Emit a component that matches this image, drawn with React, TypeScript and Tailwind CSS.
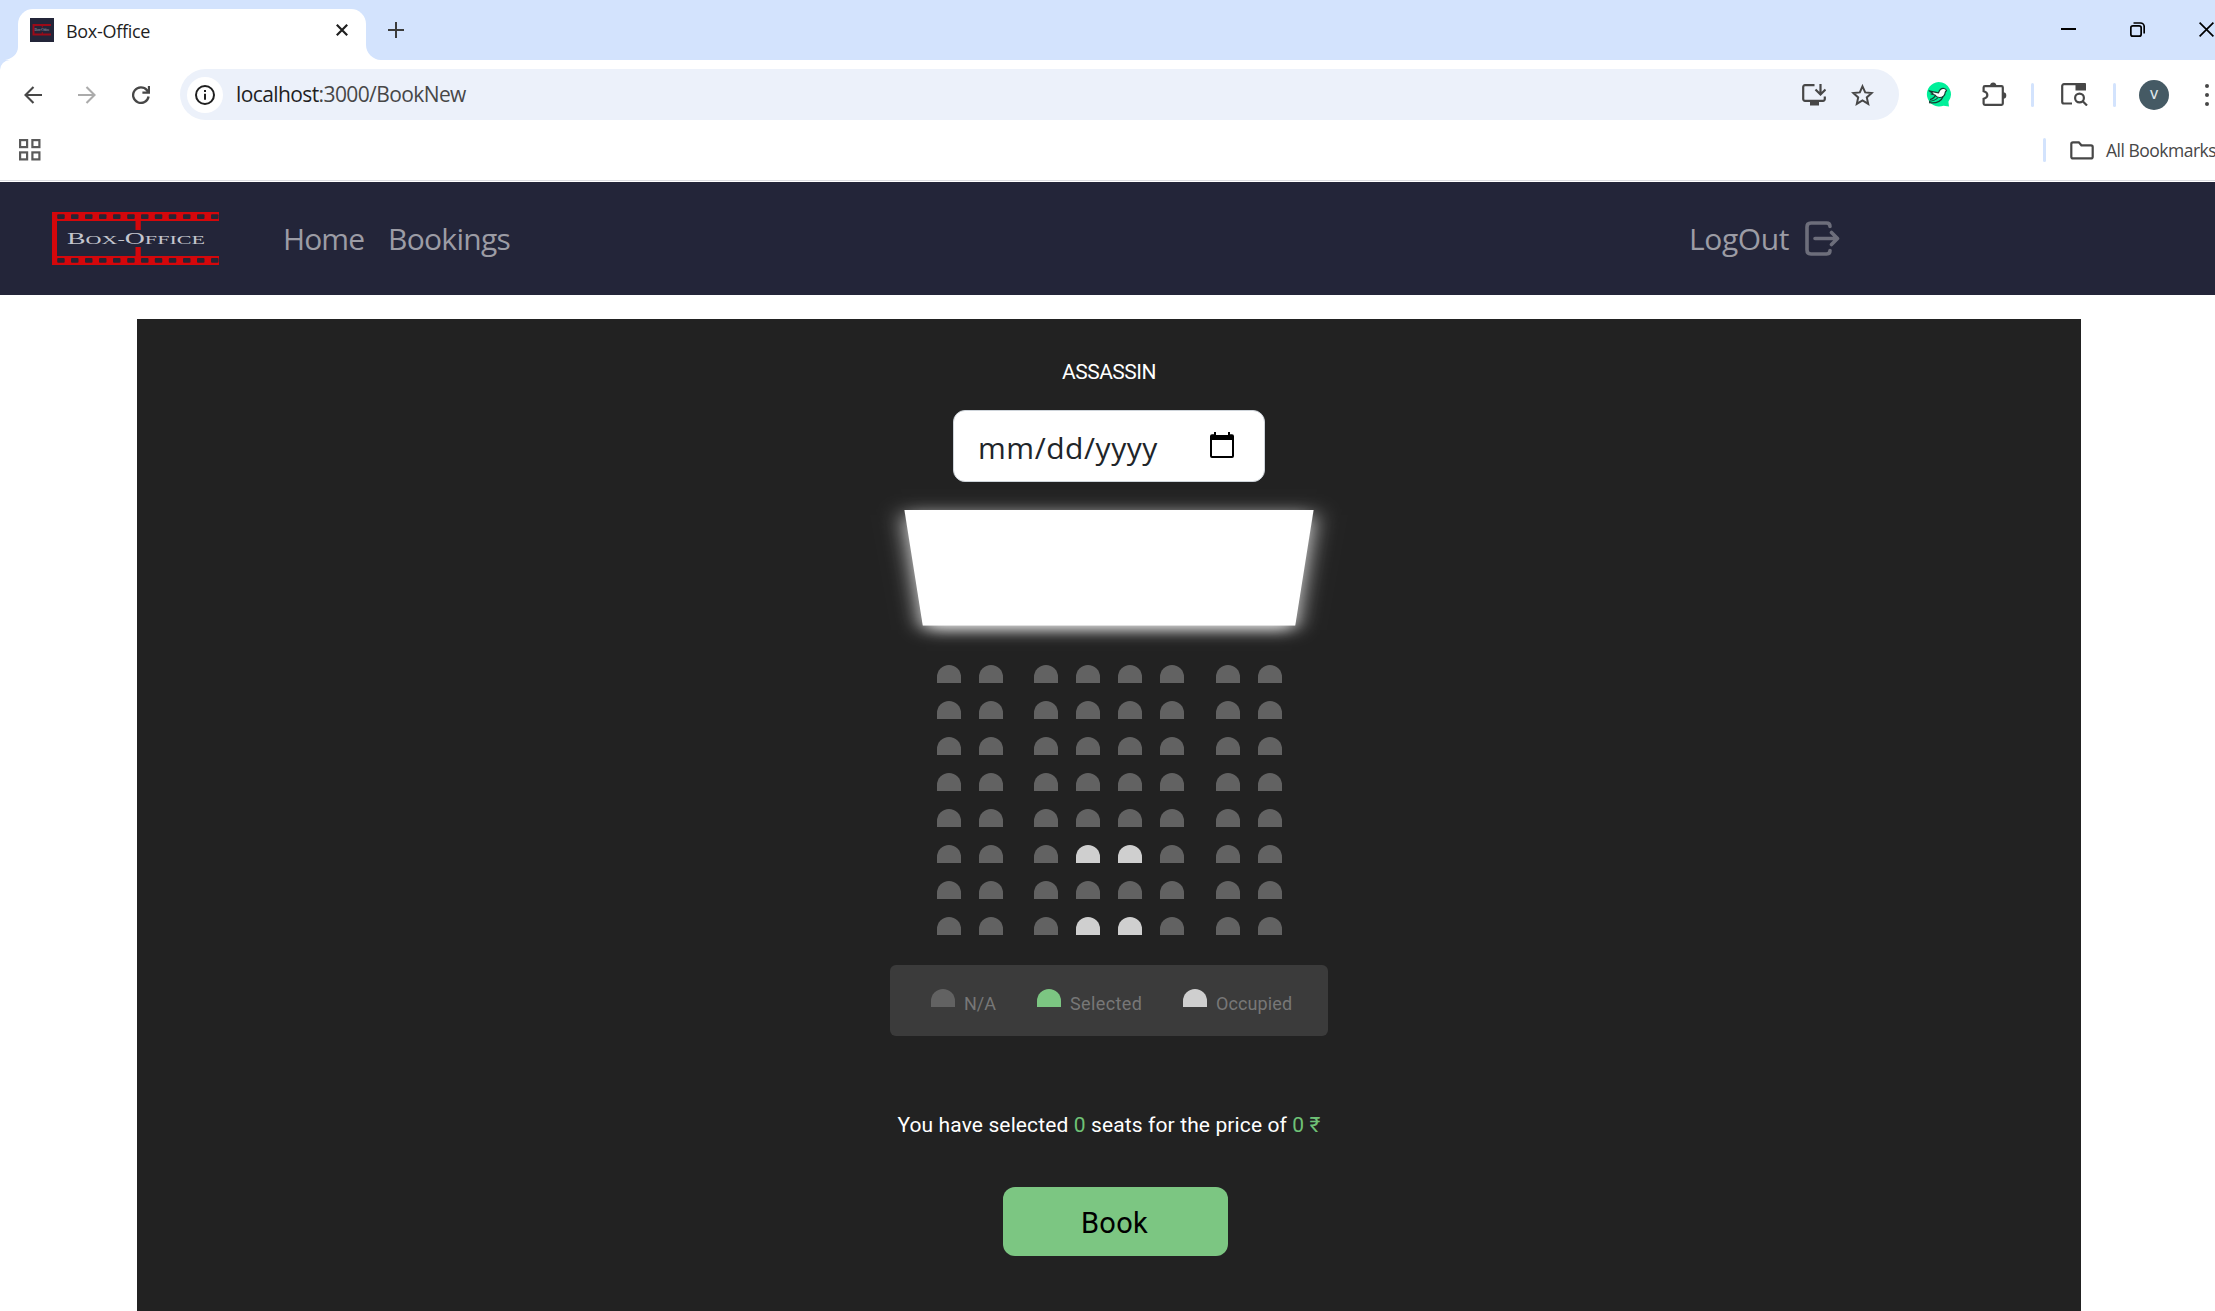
import React from 'react';

const NA = 'bg-[#626262]';
const SELECTED = 'bg-[#7cc682]';
const OCCUPIED = 'bg-[#cfcfcf]';

const occupiedSeats = new Set(['5-3', '5-4', '7-3', '7-4']);

function Seat({ color }: { color: string }) {
  return <div className={`h-[18px] w-6 shrink-0 rounded-t-[12px] ${color}`} />;
}

function BrowserTab() {
  return (
    <div className="relative mt-[9px] flex h-[51px] w-[348px] items-start rounded-t-[15px] bg-white">
      <svg className="absolute bottom-0 -left-[13px]" width="13" height="13" viewBox="0 0 13 13">
        <path d="M13 0v13H0C7 12 13 7 13 0z" fill="#fff" />
      </svg>
      <svg className="absolute -right-[15px] bottom-0" width="15" height="15" viewBox="0 0 15 15">
        <path d="M0 0v15h15C7 15 0 8 0 0z" fill="#fff" />
      </svg>
      <svg className="mt-[9px] ml-3" width="24" height="24" viewBox="0 0 24 24">
        <rect width="24" height="24" fill="#232539" />
        <path d="M21 7H3.5v9.500H21" fill="none" stroke="#9c0a18" strokeWidth="2" />
        <path d="M12.300 7v2.500M12.300 14v2.500" stroke="#9c0a18" />
        <text x="4.600" y="13.400" fontSize="4" fontFamily="Liberation Serif" fill="#9a9aa6" textLength="15">
          Box-Office
        </text>
      </svg>
      <span className="mt-[9px] ml-3 text-[18px] leading-[26px] tracking-[-0.3px] text-[#1f1f1f]">Box-Office</span>
      <svg className="mt-[15px] mr-[18px] ml-auto" width="12" height="12" viewBox="0 0 12 12">
        <path d="M.8.8l10.400 10.400M11.200.8L.8 11.200" stroke="#1f1f1f" strokeWidth="2.200" />
      </svg>
    </div>
  );
}

function TabStrip() {
  return (
    <div className="flex h-[60px] bg-[#d3e3fd] pl-[18px]">
      <BrowserTab />
      <svg className="mt-[22px] ml-[22px]" width="16" height="16" viewBox="0 0 16 16">
        <path d="M8 0v16M0 8h16" stroke="#3c3c3c" strokeWidth="2" />
      </svg>
      <div className="mt-[22px] ml-auto flex h-[15px] w-[154px]">
        <svg className="mr-[54px] shrink-0" width="15" height="15" viewBox="0 0 15 15">
          <path d="M0 7h15" stroke="#000" strokeWidth="2" />
        </svg>
        <svg className="mr-[54px] shrink-0" width="15" height="15" viewBox="0 0 15 15" fill="none" stroke="#000" strokeWidth="1.700">
          <rect x=".85" y="3.850" width="10.300" height="10.300" rx="2" />
          <path d="M3.500 1H10.500a3.700 3.700 0 0 1 3.700 3.700V11.500" />
        </svg>
        <svg className="shrink-0" width="15" height="15" viewBox="0 0 15 15">
          <path d="M.6.6l13.800 13.800M14.400.6L.6 14.400" stroke="#000" strokeWidth="1.700" />
        </svg>
      </div>
    </div>
  );
}

function Divider() {
  return <div className="h-6 w-[3px] shrink-0 rounded-sm bg-[#d3e3fd]" />;
}

function Toolbar() {
  return (
    <div className="flex h-[69px] items-center pl-6">
      <svg className="shrink-0" width="18" height="18" viewBox="0 0 18 18" fill="none" stroke="#474747" strokeWidth="2.100">
        <path d="M18 9H1.500M9.500 1L1.500 9l8 8" />
      </svg>
      <svg className="ml-9 shrink-0" width="18" height="18" viewBox="0 0 18 18" fill="none" stroke="#ababab" strokeWidth="2.100">
        <path d="M0 9h16.500M8.500 1l8 8-8 8" />
      </svg>
      <svg className="ml-9 shrink-0" width="18" height="18" viewBox="0 0 18 18" fill="none" stroke="#474747" strokeWidth="2.300">
        <path d="M16.600 10.500A7.800 7.800 0 1 1 15 4.200L16.500 6M17 0v6.600h-6.600" />
      </svg>

      <div className="ml-[30px] flex h-[51px] w-[1719px] shrink-0 items-center rounded-full bg-[#ecf1fa] pl-[7px]">
        <div className="flex size-9 items-center justify-center rounded-full bg-white">
          <svg width="20" height="20" viewBox="0 0 20 20" fill="none" stroke="#1f1f1f" strokeWidth="2">
            <circle cx="10" cy="10" r="9" />
            <path d="M10 8.800v6M10 5v2" />
          </svg>
        </div>
        <span className="-mt-px ml-[13px] text-[21px] leading-7 tracking-[-0.6px] text-[#474747]">
          <span className="text-[#1f1f1f]">localhost</span>:3000/BookNew
        </span>
        <svg className="mr-[25px] ml-auto" width="24" height="22" viewBox="0 0 24 22" fill="none" stroke="#474747" strokeWidth="2.200">
          <path d="M12.500 1.100H3A1.800 1.800 0 0 0 1.200 3v12A1.800 1.800 0 0 0 3 16.900h18a1.800 1.800 0 0 0 1.800-1.900v-2.500" />
          <path d="M18.500 0v9.500M13.500 5.500l5 5 5-5" />
          <path d="M8 19.500h9" strokeWidth="4" />
        </svg>
        <svg className="mr-[25px]" width="23" height="22" viewBox="0 0 23 22" fill="none" stroke="#474747" strokeWidth="2">
          <path d="M11.500 2.300l2.700 6.100 6.500.6-4.900 4.400 1.400 6.500-5.700-3.400-5.700 3.400 1.400-6.500L2.300 9l6.500-.6z" />
        </svg>
      </div>

      <svg className="ml-[27px] shrink-0" width="25" height="25" viewBox="0 0 25 25">
        <path d="M12.500 0A12.300 12.300 0 1 0 17.500 23.800L23 24.500l-.6-4.700A12.400 12.400 0 0 0 12.500 0z" fill="#00f09a" />
        <path
          d="M3 8.800l9.500 2c1-3 3.500-4.600 5.500-4.300 1.500.3 2.300 1 2.500 2-.3.500-.8 1-1.200 1.500-.3 3.500-2.300 5.500-5.800 5.500-2 0-3.500-1-4.500-2.500L5 12l2-.5z"
          fill="#fff"
          stroke="#173d33"
          strokeWidth="1.200"
          strokeLinejoin="round"
        />
        <path d="M9.500 13c-1 3-3.500 4-5.500 4.500M12 15.500c-2 2.500-5 3.500-9 3.800M3 20.700c6 .6 12-.7 14-6" fill="none" stroke="#173d33" strokeWidth="1.200" />
      </svg>
      <svg className="ml-[31px] shrink-0" width="25" height="25" viewBox="0 0 25 25">
        <path
          d="M3 4.200h16.500c.8 0 1.300.5 1.300 1.300v16c0 .8-.5 1.300-1.300 1.300H3c-.8 0-1.400-.5-1.400-1.300v-4.700c5-1.300 5-6.300 0-7.600V5.500c0-.8.600-1.300 1.400-1.300z"
          fill="none"
          stroke="#474747"
          strokeWidth="2.200"
        />
        <path d="M8 4a3.200 3.500 0 0 1 6.400 0zM21 10.300a3.300 3.300 0 0 1 0 6.600z" fill="#474747" />
      </svg>
      <div className="ml-6 flex shrink-0">
        <Divider />
      </div>
      <svg className="ml-[27px] shrink-0" width="27" height="23" viewBox="0 0 27 23" fill="none" stroke="#474747" strokeWidth="2.200">
        <path d="M11 20.500H3A1.800 1.800 0 0 1 1.200 18.700V3A1.800 1.800 0 0 1 3 1.200h20.500v5" />
        <path d="M14.500.1h9A1.500 1.500 0 0 1 25 1.600v6H14.500z" fill="#474747" stroke="none" />
        <circle cx="18.500" cy="15" r="4.400" />
        <path d="M21.500 18l4.500 4.500" />
      </svg>
      <div className="ml-[25px] flex shrink-0">
        <Divider />
      </div>
      <div className="ml-[23px] flex size-[30px] shrink-0 items-center justify-center rounded-full bg-[#455a64] text-[13px] leading-none font-semibold text-[#dfe6ea]">
        V
      </div>
      <div className="ml-9 flex shrink-0 flex-col gap-[5px]">
        <div className="size-[4px] rounded-full bg-[#474747]" />
        <div className="size-[4px] rounded-full bg-[#474747]" />
        <div className="size-[4px] rounded-full bg-[#474747]" />
      </div>
    </div>
  );
}

function BookmarksBar() {
  return (
    <div className="mt-px flex h-10 items-center pl-[19px]">
      <svg className="shrink-0" width="22" height="22" viewBox="0 0 22 22" fill="none" stroke="#5a5a5a" strokeWidth="2.200">
        <rect x="1.100" y="1.100" width="7" height="7" />
        <rect x="13.400" y="1.100" width="7" height="7" />
        <rect x="1.100" y="13.400" width="7" height="7" />
        <rect x="13.400" y="13.400" width="7" height="7" />
      </svg>
      <div className="ml-auto flex w-[172px] shrink-0 items-center">
        <Divider />
        <svg className="ml-6 shrink-0" width="24" height="19" viewBox="0 0 24 19" fill="none" stroke="#474747" strokeWidth="2.200">
          <path d="M3 1.300h5.800l2.600 3H21c1 0 1.700.6 1.700 1.600V15.700c0 1-.7 1.700-1.700 1.700H3c-1 0-1.700-.7-1.700-1.700V3c0-1 .7-1.700 1.700-1.700z" />
        </svg>
        <span className="ml-3 text-[17.5px] leading-6 tracking-[-0.5px] whitespace-nowrap text-[#474747]">All Bookmarks</span>
      </div>
    </div>
  );
}

const holes = [5.2, 19, 33, 47, 61, 75.2, 89, 102.8, 116.8, 131, 145, 159];

function Logo() {
  return (
    <svg className="shrink-0" width="167" height="53" viewBox="0 0 167 53">
      <g fill="#d4070b">
        <rect width="5" height="53" />
        <rect width="167" height="9" />
        <rect y="44" width="167" height="9" />
        <rect x="83.500" y="8" width="5.300" height="10" />
        <rect x="83.500" y="35" width="5.300" height="10" />
      </g>
      <g fill="#262534">
        {holes.map((x) => (
          <React.Fragment key={x}>
            <rect x={x} y="2.200" width="7.500" height="4.800" rx="1" />
            <rect x={x} y="46" width="7.500" height="4.800" rx="1" />
          </React.Fragment>
        ))}
      </g>
      <text
        x="15"
        y="32"
        fontSize="17"
        fontFamily="Liberation Serif, serif"
        fill="#c4c5ce"
        textLength="138"
        lengthAdjust="spacingAndGlyphs"
      >
        B<tspan fontSize="13.500">OX-</tspan>O<tspan fontSize="13.500">FFICE</tspan>
      </text>
    </svg>
  );
}

function SiteNav() {
  return (
    <nav className="flex h-[113px] items-center bg-[#232539] pl-[52px] text-[30px] leading-10 text-[#9c9ca5]">
      <Logo />
      <span className="ml-[64px] w-[105px] tracking-[-0.9px]">Home</span>
      <span className="tracking-[-0.7px]">Bookings</span>
      <div className="mr-[375px] ml-auto flex items-center">
        <span className="w-[116px] tracking-[-0.4px]">LogOut</span>
        <svg width="35" height="35" viewBox="0 0 35 35" fill="none" stroke="#6d6e7b" strokeWidth="3.600" strokeLinecap="round" strokeLinejoin="round">
          <path d="M25 5.500c0-2.500-1-3.500-3.500-3.500H6C3 2 2 3.500 2 6v23c0 2.500 1 4 4 4h15.500c2.500 0 3.500-1 3.500-3.500" />
          <path d="M10 17.500h21M26.500 11.500l6 6-6 6" />
        </svg>
      </div>
    </nav>
  );
}

function DateField() {
  return (
    <div className="mt-[23px] flex h-[72px] w-[312px] items-center rounded-[12px] border border-[#ced4da] bg-white pr-[30px] pl-6 text-[#212529]">
      <span className="pt-[3px] text-[30px] leading-10 tracking-[0.55px]">mm/dd/yyyy</span>
      <svg className="-mt-[3px] ml-auto" width="24" height="26" viewBox="0 0 24 26">
        <path d="M4 0h2v3h12V0h2v2.300h2A2 2 0 0 1 24 4.300V24a2 2 0 0 1-2 2H2a2 2 0 0 1-2-2V4.300A2 2 0 0 1 2 2.300h2zM2 8v16h20V8z" fill="#000" fillRule="evenodd" />
      </svg>
    </div>
  );
}

function Screen() {
  return (
    <div className="mt-[7px] flex [perspective:1228px]">
      <div className="h-[163px] w-[390px] [transform:rotateX(-45deg)] bg-white shadow-[0_7px_22px_rgba(255,255,255,0.95)]" />
    </div>
  );
}

function Seats() {
  return (
    <div className="mt-[13px] flex flex-col gap-[18px]">
      {Array.from({ length: 8 }, (_, row) => (
        <div key={row} className="flex">
          {Array.from({ length: 8 }, (_, col) => (
            <div key={col} className={col === 1 ? 'mr-[31px]' : col === 5 ? 'mr-8' : col === 7 ? '' : 'mr-[18px]'}>
              <Seat color={occupiedSeats.has(`${row}-${col}`) ? OCCUPIED : NA} />
            </div>
          ))}
        </div>
      ))}
    </div>
  );
}

function Legend() {
  return (
    <div className="mt-[30px] flex h-[71px] w-[438px] rounded-[6px] bg-[#3b3b3b] pt-6 pl-[41px] font-['Roboto',sans-serif] text-[18px] leading-[30px] text-[#777777]">
      <div className="flex w-[106px]">
        <Seat color={NA} />
        <span className="ml-[9px]">N/A</span>
      </div>
      <div className="flex w-[146px]">
        <Seat color={SELECTED} />
        <span className="ml-[9px] tracking-[0.4px]">Selected</span>
      </div>
      <div className="flex">
        <Seat color={OCCUPIED} />
        <span className="ml-[9px] tracking-[0.1px]">Occupied</span>
      </div>
    </div>
  );
}

function BookingPanel() {
  return (
    <main className="mt-6 ml-[137px] flex h-[992px] w-[1944px] flex-col items-center overflow-hidden bg-[#222222]">
      <h1 className="mt-[38px] font-['Roboto',sans-serif] text-[21px] leading-[30px] tracking-[-0.5px] text-white">ASSASSIN</h1>
      <DateField />
      <Screen />
      <Seats />
      <Legend />
      <p className="mt-[74px] font-['Roboto',sans-serif] text-[21px] leading-[30px] tracking-[0.12px] whitespace-nowrap text-white">
        You have selected <span className="text-[#6fc276]">0</span> seats for the price of{' '}
        <span className="text-[#6fc276]">0 ₹</span>
      </p>
      <button className="mt-[47px] ml-[13px] h-[69px] w-[225px] rounded-[12px] bg-[#7cc682] pt-[3px] pr-[2px] font-['Roboto',sans-serif] text-[29px] leading-[34px] tracking-[0.3px] text-black">
        Book
      </button>
    </main>
  );
}

export default function App() {
  return (
    <div className="h-[1311px] w-[2215px] overflow-hidden bg-white font-['Open_Sans','Noto_Sans',sans-serif]">
      <div className="bg-[#d3e3fd]">
        <TabStrip />
        <div className="h-[122px] rounded-tl-[10px] bg-white">
          <div className="h-[121px] border-b border-[#dadce0]">
            <Toolbar />
            <BookmarksBar />
          </div>
        </div>
      </div>
      <SiteNav />
      <BookingPanel />
    </div>
  );
}
